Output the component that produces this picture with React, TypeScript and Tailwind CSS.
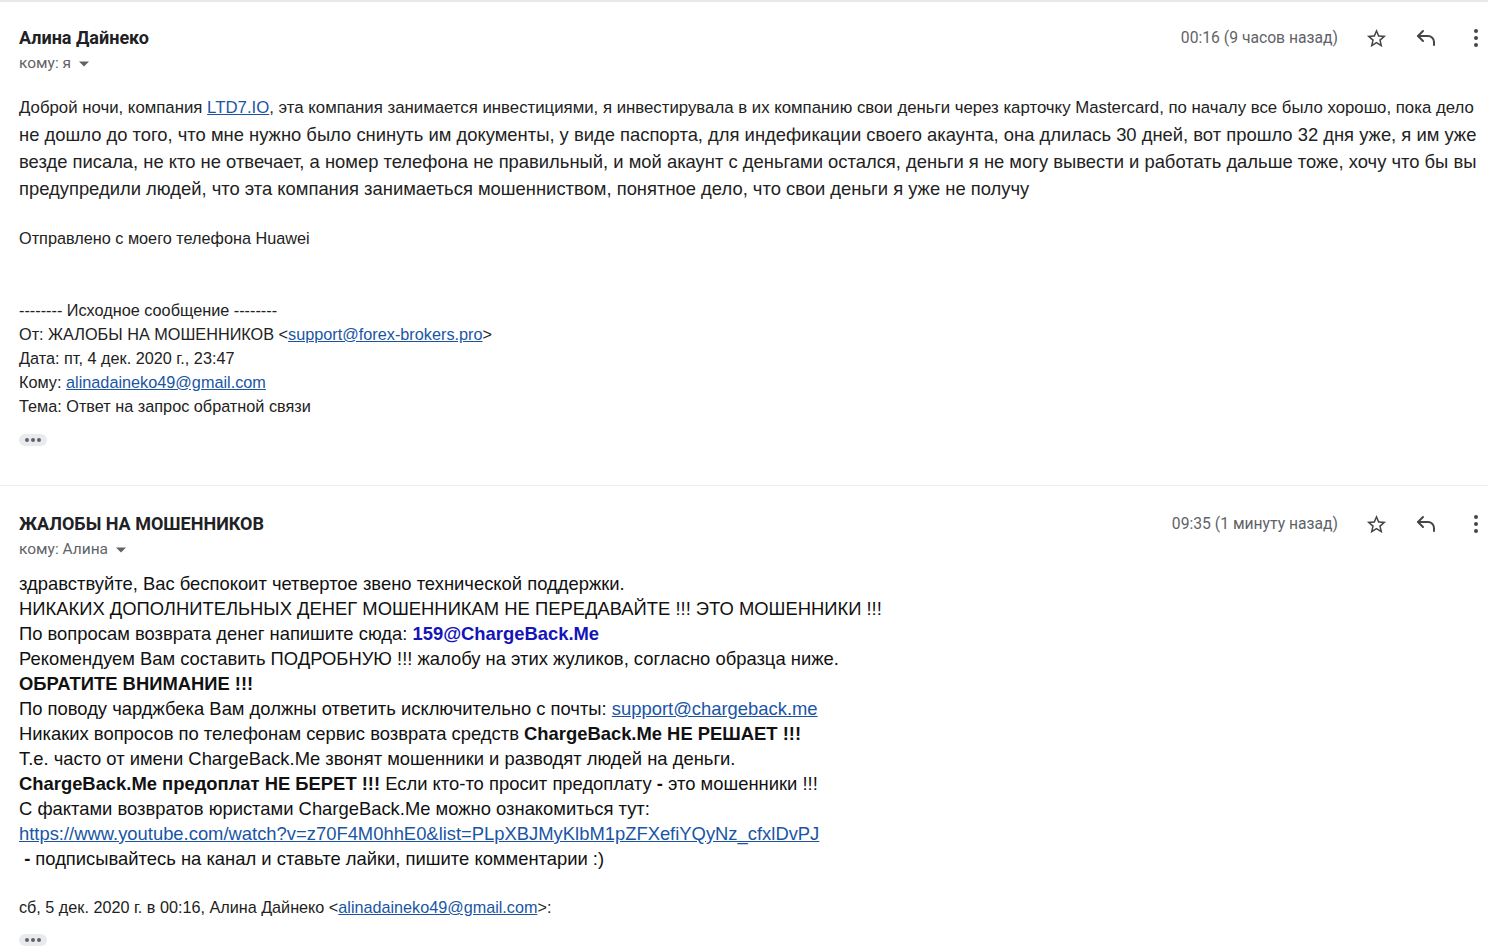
import React from "react";

const StarIcon = () => (
  <svg width="23" height="23" viewBox="0 0 24 24" fill="#444746">
    <path d="M22 9.24l-7.19-.62L12 2 9.19 8.63 2 9.24l5.46 4.73L5.82 21 12 17.27 18.18 21l-1.63-7.03L22 9.24zM12 15.4l-3.76 2.27 1-4.28-3.32-2.88 4.38-.38L12 6.1l1.71 4.04 4.38.38-3.32 2.88 1 4.28L12 15.4z" />
  </svg>
);

const ReplyIcon = () => (
  <svg width="24" height="24" viewBox="0 0 24 24" fill="none" stroke="#444746" strokeWidth="2" strokeLinecap="round" strokeLinejoin="round">
    <polyline points="9 15 4 10 9 5" />
    <path d="M20 19v-3a6 6 0 0 0-6-6H4" />
  </svg>
);

const MoreIcon = () => (
  <svg width="24" height="24" viewBox="0 0 24 24" fill="#444746">
    <circle cx="12" cy="5" r="2" />
    <circle cx="12" cy="12" r="2" />
    <circle cx="12" cy="19" r="2" />
  </svg>
);

const Caret = () => (
  <svg width="10" height="6" viewBox="0 0 10 5" className="ml-[8px] mt-[2px]" fill="#5f6368">
    <path d="M0 0l5 5 5-5z" />
  </svg>
);

const Dots = () => (
  <div className="flex items-center justify-center gap-[2px] w-[28px] h-[12px] rounded-full bg-[#e8eaed]">
    <span className="w-[4px] h-[4px] rounded-full bg-[#5f6368]" />
    <span className="w-[4px] h-[4px] rounded-full bg-[#5f6368]" />
    <span className="w-[4px] h-[4px] rounded-full bg-[#5f6368]" />
  </div>
);

function Header({ name, to, time }: { name: string; to: string; time: string }) {
  return (
    <div className="flex items-start">
      <div className="flex-1">
        <div className="font-['Roboto'] font-bold text-[18px] leading-[24px] text-[#202124]">{name}</div>
        <div className="flex items-center font-['Roboto'] text-[15.5px] leading-[20px] text-[#5f6368] mt-[3px]">
          {to}
          <Caret />
        </div>
      </div>
      <div className="flex items-center h-[24px]">
        <span className="font-['Roboto'] text-[15.7px] text-[#5f6368] mr-[13px]">{time}</span>
        <div className="w-[50px] flex justify-center"><StarIcon /></div>
        <div className="w-[50px] flex justify-center"><ReplyIcon /></div>
        <div className="w-[50px] flex justify-center"><MoreIcon /></div>
      </div>
    </div>
  );
}

const A = ({ children }: { children: React.ReactNode }) => (
  <span className="text-[#1a55a5] underline">{children}</span>
);

export default function App() {
  return (
    <div className="w-[1506px] h-[952px] overflow-hidden bg-white font-['Liberation_Sans'] text-[#222]">
      <div className="w-[1488px] h-[2px] bg-[#e8e8e8]" />

      <div className="pl-[19px] pr-[5px] pt-[24px]">
        <Header name="Алина Дайнеко" to="кому: я" time="00:16 (9 часов назад)" />

        <div className="leading-[27px] mt-[21px] whitespace-nowrap">
          <div className="text-[16.8px]">
            Доброй ночи, компания <A>LTD7.IO</A>, эта компания занимается инвестициями, я инвестирувала в их компанию свои деньги через карточку Mastercard, по началу все было хорошо, пока дело
          </div>
          <div className="text-[18.4px]">
            не дошло до того, что мне нужно было снинуть им документы, у виде паспорта, для индефикации своего акаунта, она длилась 30 дней, вот прошло 32 дня уже, я им уже
          </div>
          <div className="text-[18.4px]">
            везде писала, не кто не отвечает, а номер телефона не правильный, и мой акаунт с деньгами остался, деньги я не могу вывести и работать дальше тоже, хочу что бы вы
          </div>
          <div className="text-[18.4px]">
            предупредили людей, что эта компания занимаеться мошенниством, понятное дело, что свои деньги я уже не получу
          </div>
        </div>

        <div className="text-[16.25px] leading-[27px] mt-[23px]">Отправлено с моего телефона Huawei</div>

        <div className="text-[16.25px] leading-[24px] mt-[46px]">
          <div>-------- Исходное сообщение --------</div>
          <div>От: ЖАЛОБЫ НА МОШЕННИКОВ &lt;<A>support@forex-brokers.pro</A>&gt;</div>
          <div>Дата: пт, 4 дек. 2020 г., 23:47</div>
          <div>Кому: <A>alinadaineko49@gmail.com</A></div>
          <div>Тема: Ответ на запрос обратной связи</div>
        </div>

        <div className="mt-[16px]"><Dots /></div>
      </div>

      <div className="w-[1488px] h-[1px] bg-[#ececec] mt-[39px]" />

      <div className="pl-[19px] pr-[5px] pt-[26px]">
        <Header name="ЖАЛОБЫ НА МОШЕННИКОВ" to="кому: Алина" time="09:35 (1 минуту назад)" />

        <div className="text-[18.4px] leading-[25px] mt-[12px] text-[#111]">
          <div>здравствуйте, Вас беспокоит четвертое звено технической поддержки.</div>
          <div>НИКАКИХ ДОПОЛНИТЕЛЬНЫХ ДЕНЕГ МОШЕННИКАМ НЕ ПЕРЕДАВАЙТЕ !!! ЭТО МОШЕННИКИ !!!</div>
          <div>По вопросам возврата денег напишите сюда: <b className="text-[#1414b8]">159@ChargeBack.Me</b></div>
          <div>Рекомендуем Вам составить ПОДРОБНУЮ !!! жалобу на этих жуликов, согласно образца ниже.</div>
          <div><b>ОБРАТИТЕ ВНИМАНИЕ !!!</b></div>
          <div>По поводу чарджбека Вам должны ответить исключительно с почты: <A>support@chargeback.me</A></div>
          <div>Никаких вопросов по телефонам сервис возврата средств <b>ChargeBack.Me НЕ РЕШАЕТ !!!</b></div>
          <div>Т.е. часто от имени ChargeBack.Me звонят мошенники и разводят людей на деньги.</div>
          <div><b>ChargeBack.Me предоплат НЕ БЕРЕТ !!!</b> Если кто-то просит предоплату <b>-</b> это мошенники !!!</div>
          <div>С фактами возвратов юристами ChargeBack.Me можно ознакомиться тут:</div>
          <div><A>https://www.youtube.com/watch?v=z70F4M0hhE0&amp;list=PLpXBJMyKlbM1pZFXefiYQyNz_cfxlDvPJ</A></div>
          <div>&nbsp;<b>-</b> подписывайтесь на канал и ставьте лайки, пишите комментарии :)</div>
        </div>

        <div className="text-[16.2px] leading-[24px] mt-[24px]">
          сб, 5 дек. 2020 г. в 00:16, Алина Дайнеко &lt;<A>alinadaineko49@gmail.com</A>&gt;:
        </div>

        <div className="mt-[15px]"><Dots /></div>
      </div>
    </div>
  );
}
